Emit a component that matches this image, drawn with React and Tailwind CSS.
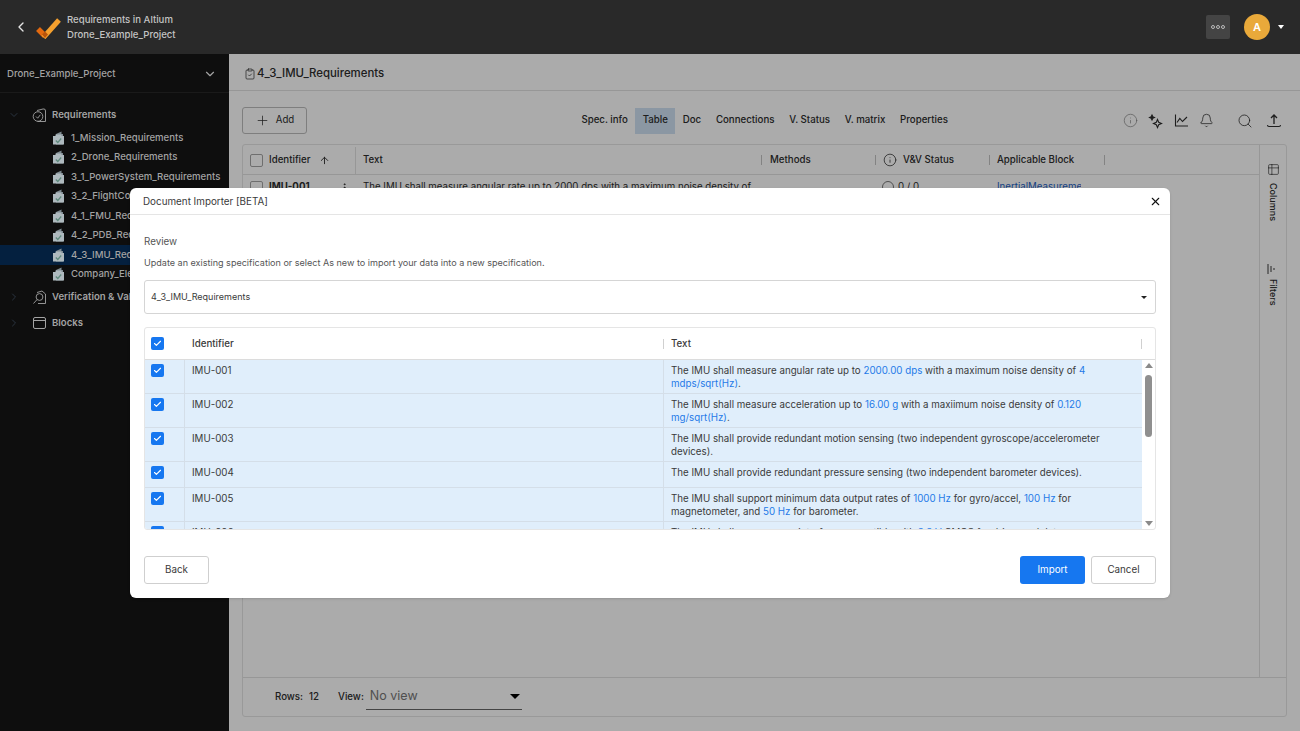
import { ArrowUp, Bell, Check, ChevronDown, ChevronLeft, ChevronRight, ClipboardCheck, EllipsisVertical, Info, Plus, Search, Table2, X } from "lucide-react";

const specs = [
  "1_Mission_Requirements",
  "2_Drone_Requirements",
  "3_1_PowerSystem_Requirements",
  "3_2_FlightController_Requirements",
  "4_1_FMU_Requirements",
  "4_2_PDB_Requirements",
  "4_3_IMU_Requirements",
  "Company_Electronics_Requirements",
];

const tabs = ["Spec. info", "Table", "Doc", "Connections", "V. Status", "V. matrix", "Properties"];

const Val = ({ children }) => <span className="text-[#1f7ae8]">{children}</span>;

const rows = [
  {
    id: "IMU-001",
    h: "h-[34px]",
    text: (
      <>
        The IMU shall measure angular rate up to <Val>2000.00 dps</Val> with a maximum noise density of <Val>4 mdps/sqrt(Hz)</Val>.
      </>
    ),
  },
  {
    id: "IMU-002",
    h: "h-[34px]",
    text: (
      <>
        The IMU shall measure acceleration up to <Val>16.00 g</Val> with a maxiimum noise density of <Val>0.120 mg/sqrt(Hz)</Val>.
      </>
    ),
  },
  {
    id: "IMU-003",
    h: "h-[34px]",
    text: <>The IMU shall provide redundant motion sensing (two independent gyroscope/accelerometer devices).</>,
  },
  {
    id: "IMU-004",
    h: "h-[26px]",
    text: <>The IMU shall provide redundant pressure sensing (two independent barometer devices).</>,
  },
  {
    id: "IMU-005",
    h: "h-[34px]",
    text: (
      <>
        The IMU shall support minimum data output rates of <Val>1000 Hz</Val> for gyro/accel, <Val>100 Hz</Val> for magnetometer, and <Val>50 Hz</Val> for barometer.
      </>
    ),
  },
  {
    id: "IMU-006",
    h: "h-[34px]",
    text: (
      <>
        The IMU shall use a sensor interface compatible with <Val>3.3 V</Val> CMOS for driver and data acquisition within the FMU.
      </>
    ),
  },
];

function SpecIcon() {
  return (
    <svg width="13" height="14" viewBox="0 0 13 14" className="shrink-0">
      <path d="M4 3 L9.5 0.5 V3 H11 V13.5 H4 Z" fill="#7f8b92" />
      <path d="M1 5 H3.5 V3.5 H9.5 V5 H12 V13.5 H1 Z" fill="#aeb9be" />
      <path d="M3.8 9.5 L5.8 11.5 L9.2 7.5" fill="none" stroke="#5f8a7d" strokeWidth="1.2" />
    </svg>
  );
}

function RequirementsIcon() {
  return (
    <svg width="15" height="15" viewBox="0 0 15 15" fill="none" stroke="#a3a3a3" strokeWidth="0.9" className="shrink-0">
      <path d="M5 2.5 L11 1 H12 Q13.5 1 13.5 3 V13.5 H5.5" />
      <circle cx="6" cy="8.5" r="4.8" />
      <path d="M4 8.5 L5.7 10.2 L8.3 6.8" />
    </svg>
  );
}

function VerificationIcon() {
  return (
    <svg width="15" height="15" viewBox="0 0 15 15" fill="none" stroke="#a3a3a3" strokeWidth="0.9" className="shrink-0">
      <path d="M5 2.5 L10 1 L13.5 4 V13.5 H6" />
      <circle cx="7.5" cy="7" r="3.4" />
      <path d="M5 9.6 L1.5 13.5" />
    </svg>
  );
}

function Logo() {
  return (
    <svg width="26" height="22" viewBox="0 0 26 22">
      <path d="M3 12 L10 19" fill="none" stroke="#e2690f" strokeWidth="5.5" />
      <path d="M8.5 20.5 L24 3" fill="none" stroke="#f5a02e" strokeWidth="5" />
      <path d="M7 17.5 L10 21 L13 17.5 L10 14.5 Z" fill="#b8530a" />
    </svg>
  );
}

function SparkIcon() {
  return (
    <svg width="16" height="16" viewBox="0 0 16 16" fill="none" stroke="#2d2d2d" strokeWidth="1.1">
      <path d="M9.5 6.5 L10.7 9.3 L13.5 10.5 L10.7 11.7 L9.5 14.5 L8.3 11.7 L5.5 10.5 L8.3 9.3 Z" />
      <path d="M4 2 L4.8 3.7 L6.5 4.5 L4.8 5.3 L4 7 L3.2 5.3 L1.5 4.5 L3.2 3.7 Z" fill="#2d2d2d" />
    </svg>
  );
}

function GraphIcon() {
  return (
    <svg width="15" height="15" viewBox="0 0 15 15" fill="none" stroke="#2d2d2d" strokeWidth="1.1">
      <path d="M1.5 1.5 V13 H14" />
      <path d="M3 9.5 L5.8 5.5 L8.5 8.5 L13 4" />
    </svg>
  );
}

function UploadIcon() {
  return (
    <svg width="16" height="16" viewBox="0 0 16 16" fill="none" stroke="#2d2d2d" strokeWidth="1.1">
      <path d="M8 11 V2 M5 5 L8 2 L11 5" strokeWidth="1.3" />
      <path d="M1.5 12 Q1.5 13.5 3 13.5 H13 Q14.5 13.5 14.5 12" />
    </svg>
  );
}

function FilterIcon() {
  return (
    <svg width="12" height="12" viewBox="0 0 12 12" fill="none" stroke="#3a3a3a" strokeWidth="1">
      <path d="M1 1 V11 M4 3 V9 M7 5 V7" />
    </svg>
  );
}

function Checkbox() {
  return (
    <span className="w-[13px] h-[13px] rounded-[2px] bg-[#1677f0] flex items-center justify-center shrink-0">
      <Check size={9} strokeWidth={3} className="text-white" />
    </span>
  );
}

function ColGrip() {
  return <span className="ml-auto w-px h-[10px] bg-[#c4c4c4] shrink-0" />;
}

function Sidebar() {
  return (
    <aside className="w-[229px] shrink-0 bg-[#0e0e0e] text-[#a3a3a3] text-[9.6px] font-medium">
      <div className="h-[39px] pt-[2px] flex items-center justify-between pl-[7px] pr-[12px] border-b border-[#1a1a1a]">
        <span>Drone_Example_Project</span>
        <ChevronDown size={14} />
      </div>
      <div className="pt-[12px]">
        <div className="h-[20px] flex items-center pl-[8px]">
          <ChevronDown size={12} className="text-[#2a3440]" />
          <span className="ml-[12px]">
            <RequirementsIcon />
          </span>
          <span className="ml-[5px] font-semibold">Requirements</span>
        </div>
        <div className="pt-[3px]">
          {specs.map((name) => (
            <div
              key={name}
              className={`h-[19.5px] flex items-center gap-[6px] pl-[52px] whitespace-nowrap ${
                name === "4_3_IMU_Requirements" ? "bg-[#04203f]" : ""
              }`}
            >
              <SpecIcon />
              <span>{name}</span>
            </div>
          ))}
        </div>
        <div className="h-[20px] mt-[3px] flex items-center pl-[8px]">
          <ChevronRight size={12} className="text-[#2a3440]" />
          <span className="ml-[12px]">
            <VerificationIcon />
          </span>
          <span className="ml-[5px] font-semibold">Verification &amp; Validation</span>
        </div>
        <div className="h-[20px] mt-[6px] flex items-center pl-[8px]">
          <ChevronRight size={12} className="text-[#2a3440]" />
          <span className="ml-[13px] w-[13px] h-[12px] border border-[#a3a3a3] rounded-[2px] shrink-0 flex items-start">
            <span className="w-full mt-[2px] border-t border-[#a3a3a3]" />
          </span>
          <span className="ml-[6px] font-semibold">Blocks</span>
        </div>
      </div>
    </aside>
  );
}

function Main() {
  return (
    <main className="relative flex-1 flex flex-col bg-white text-[#2d2d2d] min-w-0">
      <div className="h-[37px] pt-[3px] shrink-0 flex items-center gap-[1px] pl-[15px] border-b border-[#e2e2e2] text-[11.4px] font-medium">
        <ClipboardCheck size={12} strokeWidth={1.4} />
        <span>4_3_IMU_Requirements</span>
      </div>
      <div className="flex-1 flex flex-col px-[13px] pb-[14px] min-h-0">
        <div className="h-[53px] pt-[6px] shrink-0 flex items-center relative">
          <button className="w-[65px] h-[27px] flex items-center justify-center gap-[6px] border border-[#bcbcbc] rounded-[3px] text-[9.7px]">
            <Plus size={15} strokeWidth={1.2} />
            Add
          </button>
          <nav className="ml-[267px] flex items-center text-[9.7px] font-medium whitespace-nowrap">
            {tabs.map((t) => (
              <span key={t} className={`h-[26px] flex items-center px-[7.4px] ${t === "Table" ? "bg-[#cfe2f3]" : ""}`}>
                {t}
              </span>
            ))}
          </nav>
          <div className="ml-auto pr-[5px] flex items-center gap-[10px]">
            <Info size={15} strokeWidth={1} className="text-[#777]" />
            <SparkIcon />
            <GraphIcon />
            <Bell size={15} strokeWidth={1.2} />
            <Search size={16} strokeWidth={1.2} className="ml-[13px]" />
            <span className="ml-[3px]">
              <UploadIcon />
            </span>
          </div>
        </div>
        <div className="flex-1 flex flex-col border border-[#e5e5e5] rounded-[3px] min-h-0">
          <div className="flex-1 flex min-h-0">
            <div className="flex-1 text-[9.7px] min-w-0">
              <div className="h-[30px] pt-[2px] flex items-center border-b border-[#e2e2e2] font-medium">
                <div className="w-[113px] flex items-center pl-[7px] gap-[6px] border-r border-[#e2e2e2] h-full">
                  <span className="w-[13px] h-[13px] border border-[#a5a5a5] rounded-[2px]" />
                  Identifier
                  <ArrowUp size={11} className="ml-[3px]" />
                </div>
                <div className="w-[406px] pl-[7px] flex items-center">
                  Text
                  <ColGrip />
                </div>
                <div className="w-[114px] pl-[8px] flex items-center">
                  Methods
                  <ColGrip />
                </div>
                <div className="w-[114px] pl-[7px] flex items-center gap-[6px]">
                  <Info size={14} strokeWidth={1.3} />
                  V&amp;V Status
                  <ColGrip />
                </div>
                <div className="w-[115px] pl-[7px] flex items-center">
                  Applicable Block
                  <ColGrip />
                </div>
              </div>
              <div className="h-[30px] flex items-start pt-[5px]">
                <div className="w-[113px] flex items-center pl-[7px] gap-[6px] font-bold">
                  <span className="w-[13px] h-[13px] border border-[#a5a5a5] rounded-[2px]" />
                  IMU-001
                  <EllipsisVertical size={11} className="ml-auto mr-[6px]" />
                </div>
                <div className="w-[406px] pl-[7px] whitespace-nowrap overflow-hidden">The IMU shall measure angular rate up to 2000 dps with a maximum noise density of</div>
                <div className="w-[114px]" />
                <div className="w-[114px] pl-[6px] flex items-center gap-[4px]">
                  <span className="w-[12px] h-[12px] border border-[#777] rounded-full" />0 / 0
                </div>
                <div className="w-[94px] pr-[3px] pl-[7px] whitespace-nowrap overflow-hidden text-[#1d5fc4]">
                  <div className="overflow-hidden">InertialMeasurement</div>
                </div>
              </div>
            </div>
            <div className="w-[27px] shrink-0 border-l border-[#e2e2e2] flex flex-col items-center pt-[18px] text-[9px] font-medium">
              <Table2 size={13} strokeWidth={1.2} />
              <span className="mt-[7px] [writing-mode:vertical-rl]">Columns</span>
              <span className="mt-[42px]">
                <FilterIcon />
              </span>
              <span className="mt-[4px] [writing-mode:vertical-rl]">Filters</span>
            </div>
          </div>
          <div className="h-[39px] shrink-0 flex items-center pl-[32px] border-t border-[#e2e2e2] text-[9.7px] font-medium">
            <span>Rows:</span>
            <span className="ml-[6px]">12</span>
            <span className="ml-[19px]">View:</span>
            <div className="ml-[2px] w-[156px] h-[26px] flex items-center justify-between pl-[4px] pr-[2px] border-b border-[#666]">
              <span className="text-[12.5px] font-normal text-[#777]">No view</span>
              <span className="w-0 h-0 border-x-[5px] border-x-transparent border-t-[5px] border-t-black" />
            </div>
          </div>
        </div>
      </div>
      <div className="absolute inset-0 bg-black/33" />
    </main>
  );
}

function ImportModal() {
  return (
    <div className="absolute left-[130px] top-[188px] w-[1040px] h-[410px] bg-white rounded-[6px] flex flex-col text-[#3a3a3a] shadow-sm">
      <div className="h-[27px] shrink-0 flex items-center justify-between pl-[13px] pr-[8px] border-b border-[#e5e5e5] text-[9.85px]">
        <span>Document Importer [BETA]</span>
        <X size={13} className="text-[#111]" />
      </div>
      <div className="flex-1 flex flex-col px-[14px] pt-[20px] min-h-0">
        <p className="text-[9.8px] leading-[13px] text-[#555]">Review</p>
        <p className="mt-[8px] text-[9.05px] leading-[13px] text-[#555]">Update an existing specification or select As new to import your data into a new specification.</p>
        <div className="mt-[11px] h-[34px] shrink-0 flex items-center justify-between pl-[6px] pr-[8px] border border-[#d5d5d5] rounded-[3px] text-[9px]">
          <span>4_3_IMU_Requirements</span>
          <span className="w-0 h-0 border-x-[3px] border-x-transparent border-t-[3px] border-t-[#222]" />
        </div>
        <div className="mt-[13px] h-[203px] shrink-0 flex flex-col border border-[#e5e5e5] rounded-[3px] overflow-hidden text-[9.75px]">
          <div className="h-[32px] shrink-0 flex items-center border-b border-[#dcdcdc] font-medium">
            <div className="w-[40px] pl-[6px] flex">
              <Checkbox />
            </div>
            <div className="w-[478px] pl-[7px] pt-[1px]">Identifier</div>
            <div className="flex-1 pl-[7px] pt-[1px] border-l border-[#d0d0d0] h-[10px] flex items-center">Text</div>
            <div className="w-[14px] border-l border-[#d0d0d0] h-[10px]" />
          </div>
          <div className="flex-1 flex min-h-0">
            <div className="flex-1 min-w-0 overflow-hidden bg-[#e0eefb]">
              {rows.map((r) => (
                <div key={r.id} className={`${r.h} shrink-0 flex border-b border-[#d4dee8]`}>
                  <div className="w-[40px] pl-[6px] pt-[4px] border-r border-[#d4dee8]">
                    <Checkbox />
                  </div>
                  <div className="w-[478px] pl-[7px] pt-[4px] leading-[13px]">{r.id}</div>
                  <div className="flex-1 pl-[7px] pr-[38px] pt-[4px] leading-[13px] border-l border-[#d4dee8]">{r.text}</div>
                </div>
              ))}
            </div>
            <div className="w-[13px] shrink-0 flex flex-col items-center justify-between py-[3px] relative">
              <span className="w-0 h-0 border-x-[4px] border-x-transparent border-b-[5px] border-b-[#8a8a8a]" />
              <span className="absolute top-[15px] w-[7px] h-[62px] rounded-full bg-[#8f8f8f]" />
              <span className="w-0 h-0 border-x-[4px] border-x-transparent border-t-[5px] border-t-[#8a8a8a]" />
            </div>
          </div>
        </div>
        <div className="mt-[26px] flex items-center text-[9.8px]">
          <button className="w-[65px] h-[28px] pt-[1px] border border-[#cfcfcf] rounded-[3px]">Back</button>
          <button className="ml-auto w-[65px] h-[28px] pt-[1px] bg-[#1677f0] text-white rounded-[3px]">Import</button>
          <button className="ml-[6px] w-[65px] h-[28px] pt-[1px] border border-[#cfcfcf] rounded-[3px]">Cancel</button>
        </div>
      </div>
    </div>
  );
}

export default function App() {
  return (
    <div className="relative h-[731px] w-[1300px] overflow-hidden flex flex-col font-['Inter',sans-serif]">
      <header className="h-[54px] shrink-0 bg-[#292929] flex items-center pl-[13px] pr-[16px] text-[#c4c4c4]">
        <ChevronLeft size={16} strokeWidth={2} className="text-[#e5e5e5]" />
        <span className="ml-[6px] mt-[1px]">
          <Logo />
        </span>
        <div className="ml-[6px] text-[9.6px] leading-[15px] font-medium">
          <div>Requirements in Altium</div>
          <div>Drone_Example_Project</div>
        </div>
        <span className="ml-auto w-[24px] h-[24px] bg-[#444] rounded-[2px] flex items-center justify-center gap-[1px]">
          <span className="w-[4px] h-[4px] rounded-full border border-[#bbb]" />
          <span className="w-[4px] h-[4px] rounded-full border border-[#bbb]" />
          <span className="w-[4px] h-[4px] rounded-full border border-[#bbb]" />
        </span>
        <span className="ml-[14px] w-[26px] h-[26px] rounded-full bg-[#e9a93a] text-white text-[11px] font-semibold flex items-center justify-center">A</span>
        <span className="ml-[8px] w-0 h-0 border-x-[3px] border-x-transparent border-t-[4px] border-t-white" />
      </header>
      <div className="flex-1 flex min-h-0">
        <Sidebar />
        <Main />
      </div>
      <ImportModal />
    </div>
  );
}
